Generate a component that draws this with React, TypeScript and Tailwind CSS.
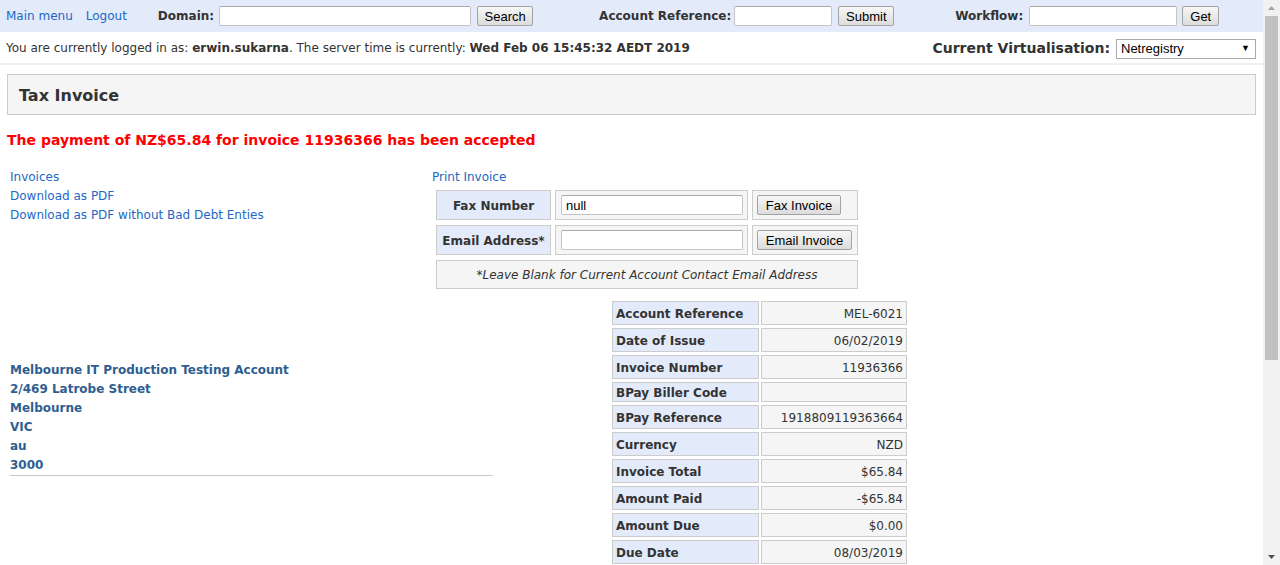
import React from "react";

const btn =
  "h-[20px] px-[6px] border border-[#a3a3a3] rounded-[2px] bg-linear-to-b from-[#f7f7f7] to-[#dcdcdc] font-['Liberation_Sans',Arial,sans-serif] text-[13px] text-black leading-none";
const input =
  "h-[20px] border border-[#c4c4c4] border-t-[#a9a9a9] rounded-[2px] bg-white px-[4px] font-['Liberation_Sans',Arial,sans-serif] text-[13px] text-black outline-none";

const details: [string, string][] = [
  ["Account Reference", "MEL-6021"],
  ["Date of Issue", "06/02/2019"],
  ["Invoice Number", "11936366"],
  ["BPay Biller Code", ""],
  ["BPay Reference", "1918809119363664"],
  ["Currency", "NZD"],
  ["Invoice Total", "$65.84"],
  ["Amount Paid", "-$65.84"],
  ["Amount Due", "$0.00"],
  ["Due Date", "08/03/2019"],
];

const address = [
  "Melbourne IT Production Testing Account",
  "2/469 Latrobe Street",
  "Melbourne",
  "VIC",
  "au",
  "3000",
];

export default function App() {
  return (
    <div className="flex h-[565px] w-[1280px] overflow-hidden bg-white font-['DejaVu_Sans',Verdana,sans-serif] text-[12px] text-[#333]">
      <div className="w-[1263px] shrink-0">
        {/* top bar */}
        <div className="flex h-[32px] items-center bg-[#e3ebfb]">
          <a className="ml-[6px] text-[#2168c6]">Main menu</a>
          <a className="ml-[13px] text-[#2168c6]">Logout</a>
          <span className="ml-[31px] font-bold">Domain:</span>
          <input className={`${input} ml-[5px] w-[252px]`} />
          <button className={`${btn} ml-[6px] w-[56px]`}>Search</button>
          <span className="ml-[66px] font-bold">Account Reference:</span>
          <input className={`${input} ml-[3px] w-[98px]`} />
          <button className={`${btn} ml-[6px] w-[56px]`}>Submit</button>
          <span className="ml-[61px] font-bold">Workflow:</span>
          <input className={`${input} ml-[6px] w-[148px]`} />
          <button className={`${btn} ml-[5px] w-[37px]`}>Get</button>
        </div>

        {/* session row */}
        <div className="flex h-[33px] items-center justify-between border-b-2 border-[#f0f0f0] pl-[6px] pr-[7px]">
          <span>
            You are currently logged in as: <b>erwin.sukarna</b>. The server time is currently:{" "}
            <b>Wed Feb 06 15:45:32 AEDT 2019</b>
          </span>
          <div className="flex items-center pt-[2px]">
            <span className="text-[14px] font-bold">Current Virtualisation:</span>
            <div className="ml-[6px] flex h-[20px] w-[140px] items-center justify-between border border-[#a9a9a9] bg-white pl-[4px] pr-[5px] font-['Liberation_Sans',Arial,sans-serif] text-[13px] text-black">
              <span>Netregistry</span>
              <span className="text-[9px]">▼</span>
            </div>
          </div>
        </div>

        {/* title */}
        <div className="mx-[7px] mt-[9px] flex h-[41px] items-center border border-[#ccc] bg-[#f5f5f5] px-[11px] pt-[2px] text-[16px] font-bold">
          Tax Invoice
        </div>

        <div className="mt-[17px] pl-[7px] text-[14px] font-bold leading-[17px] text-[#ff0000]">
          The payment of NZ$65.84 for invoice 11936366 has been accepted
        </div>

        {/* links + send options */}
        <div className="mt-[19px] flex">
          <div className="flex w-[432px] flex-col pl-[10px] leading-[19px] text-[#2168c6]">
            <a>Invoices</a>
            <a>Download as PDF</a>
            <a>Download as PDF without Bad Debt Enties</a>
          </div>
          <div>
            <a className="block leading-[19px] text-[#2168c6]">Print Invoice</a>
            <div className="mt-[3px] ml-[4px] grid grid-cols-[115px_193px_106px] gap-x-[4px] gap-y-[5px]">
              <div className="flex h-[30px] items-center justify-center border border-[#ccc] bg-[#e3ebfb] pt-[1px] font-bold">
                Fax Number
              </div>
              <div className="flex h-[30px] items-center border border-[#ccc] bg-[#f5f5f5] pl-[5px]">
                <input className={`${input} w-[182px]`} defaultValue="null" />
              </div>
              <div className="flex h-[30px] items-center border border-[#ccc] bg-[#f5f5f5] pl-[4px]">
                <button className={`${btn} w-[84px]`}>Fax Invoice</button>
              </div>
              <div className="flex h-[30px] items-center justify-center border border-[#ccc] bg-[#e3ebfb] pt-[1px] font-bold">
                Email Address*
              </div>
              <div className="flex h-[30px] items-center border border-[#ccc] bg-[#f5f5f5] pl-[5px]">
                <input className={`${input} w-[182px]`} />
              </div>
              <div className="flex h-[30px] items-center border border-[#ccc] bg-[#f5f5f5] pl-[4px]">
                <button className={`${btn} w-[95px]`}>Email Invoice</button>
              </div>
              <div className="col-span-3 flex h-[29px] items-center justify-center border border-[#ccc] bg-[#f5f5f5] pt-[1px] italic">
                *Leave Blank for Current Account Contact Email Address
              </div>
            </div>
          </div>
        </div>

        {/* address + invoice details */}
        <div className="mt-[12px] flex items-start">
          <div className="w-[612px] shrink-0 pl-[10px] pt-[60px]">
            <div className="w-[483px] border-b border-[#c8c8c8] font-bold leading-[19px] text-[#2e5e91]">
              {address.map((l) => (
                <div key={l}>{l}</div>
              ))}
            </div>
          </div>
          <div className="grid grid-cols-[147px_146px] gap-x-[2px] gap-y-[3px]">
            {details.map(([k, v]) => (
              <React.Fragment key={k}>
                <div
                  className={`flex items-center border border-[#ccc] bg-[#e3ebfb] pl-[3px] pt-[1px] font-bold ${
                    v ? "h-[24px]" : "h-[20px]"
                  }`}
                >
                  {k}
                </div>
                <div
                  className={`flex items-center justify-end border border-[#ccc] bg-[#f5f5f5] pr-[3px] pt-[1px] ${
                    v ? "h-[24px]" : "h-[20px]"
                  }`}
                >
                  {v}
                </div>
              </React.Fragment>
            ))}
          </div>
        </div>
      </div>

      {/* scrollbar */}
      <div className="flex w-[17px] flex-col bg-[#f1f1f1]">
        <div className="flex h-[16px] items-center justify-center">
          <svg width="7" height="4" viewBox="0 0 7 4">
            <path d="M0 4 L3.5 0 L7 4 Z" fill="#a3a3a3" />
          </svg>
        </div>
        <div className="mx-[2px] h-[344px] bg-[#c1c1c1]" />
        <div className="flex-1" />
        <div className="flex h-[17px] items-center justify-center">
          <svg width="7" height="4" viewBox="0 0 7 4">
            <path d="M0 0 L7 0 L3.5 4 Z" fill="#505050" />
          </svg>
        </div>
      </div>
    </div>
  );
}
